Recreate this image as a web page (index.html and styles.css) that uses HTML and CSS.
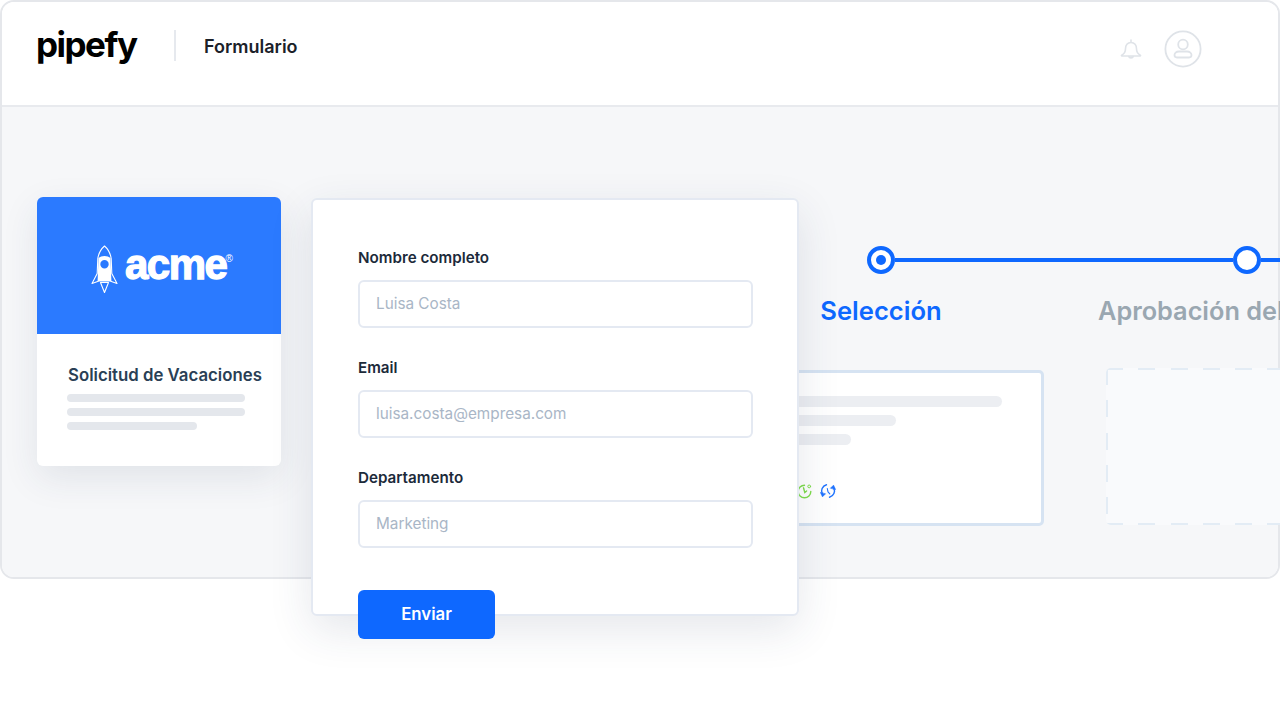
FILE: index.html
```html
<!DOCTYPE html>
<html lang="es">
<head>
<meta charset="utf-8">
<title>Formulario</title>
<link rel="stylesheet" href="styles.css">
</head>
<body>
<div class="window">
  <header class="topbar">
    <div class="brand">pipefy</div>
    <div class="divider"></div>
    <div class="page-title">Formulario</div>
    <div class="top-actions">
      <svg class="bell" width="22" height="22" viewBox="0 0 22 22" fill="none" stroke="#dfe3e8" stroke-width="1.6" stroke-linejoin="round" stroke-linecap="round">
        <path d="M11 1v2.500M11 3.500c-3.600 0-5.500 2.800-5.500 6.200 0 3-1 5-3.800 6.400-.5.3-.3.9.2.9h18.200c.5 0 .7-.6.2-.9-2.800-1.400-3.800-3.400-3.800-6.400 0-3.400-1.900-6.200-5.500-6.200z"/>
        <path d="M8.800 17.500c.4 1.900 4 1.900 4.400 0" fill="#dfe3e8"/>
      </svg>
      <svg class="avatar" width="38" height="38" viewBox="0 0 38 38" fill="none" stroke="#dfe3e8" stroke-width="1.800">
        <circle cx="19" cy="19" r="17.600"/>
        <circle cx="19" cy="14.500" r="4.800"/>
        <path d="M15 21.500h8c3 0 4.500 2 4.500 3.600 0 1.500-1 2.400-2.500 2.400H13c-1.500 0-2.500-.9-2.500-2.400 0-1.600 1.500-3.600 4.500-3.600z"/>
      </svg>
    </div>
  </header>
  <main class="stage">
    <section class="form-card-preview">
      <div class="preview-banner">
        <svg class="rocket" width="27" height="48" viewBox="0 0 27 48">
          <path d="M13.500 1C9.500 4.500 7.500 9 6.800 13.500L6.200 28.500 1 38.500l7-2.500h11l7 2.500-5.200-10-.6-15C19.500 9 17.500 4.500 13.500 1z" fill="none" stroke="#fff" stroke-width="1.100" stroke-linejoin="round"/>
          <path fill-rule="evenodd" d="M7.500 13c1.500-1.300 3.700-2 6-2s4.500.7 6 2l.9 23H6.600zM13.500 15a4.200 4.200 0 1 0 0 8.400 4.200 4.200 0 0 0 0-8.400z" fill="#fff"/>
          <path d="M9.500 37.500h8L13.500 47.500z" fill="none" stroke="#fff" stroke-width="1.100" stroke-linejoin="round"/>
        </svg>
        <span class="acme">acme<sup class="reg">®</sup></span>
      </div>
      <div class="preview-body">
        <h2 class="preview-title">Solicitud de Vacaciones</h2>
        <div class="preview-lines">
          <div class="skeleton"></div>
          <div class="skeleton"></div>
          <div class="skeleton skeleton-short"></div>
        </div>
      </div>
    </section>

    <form class="form-card">
      <div class="field">
        <div class="field-label">Nombre completo</div>
        <div class="field-input">Luisa Costa</div>
      </div>
      <div class="field">
        <div class="field-label">Email</div>
        <div class="field-input">luisa.costa@empresa.com</div>
      </div>
      <div class="field">
        <div class="field-label">Departamento</div>
        <div class="field-input">Marketing</div>
      </div>
      <div class="submit">Enviar</div>
    </form>

    <section class="pipeline">
      <div class="timeline">
        <div class="step step-current"></div>
        <div class="track track-long"></div>
        <div class="step"></div>
        <div class="track"></div>
      </div>
      <div class="phases">
        <div class="phase">
          <div class="phase-name phase-active">Selección</div>
          <div class="task">
            <div class="task-line task-line-a"></div>
            <div class="task-line task-line-b"></div>
            <div class="task-line task-line-c"></div>
            <div class="task-icons">
              <svg width="15" height="15" viewBox="0 0 15 15" fill="none" stroke="#7ddc4a" stroke-width="1.400" stroke-linecap="round">
                <path d="M7.500 1.200A6.300 6.300 0 1 0 13.800 7.500"/>
                <path d="M6.500 3.800l1.300 4.700 1.800-1.500"/>
                <circle cx="12.200" cy="2.400" r="1.400" stroke-width="1"/>
              </svg>
              <svg width="16" height="16" viewBox="0 0 16 16" fill="none" stroke="#1f73ff" stroke-width="1.400" stroke-linecap="round" stroke-linejoin="round">
                <path d="M2.400 11.200A6.400 6.400 0 0 1 6.500 1.800"/>
                <path d="M13.600 4.800A6.400 6.400 0 0 1 9.500 14.200"/>
                <path d="M.6 9.800l1.900 4 2.800-2.800z" fill="#1f73ff" stroke-width=".7"/>
                <path d="M15.400 6.200l-1.900-4-2.800 2.800z" fill="#1f73ff" stroke-width=".7"/>
                <path d="M7.300 5.500l.7 3.400 1.800 2" stroke-width="1.100"/>
              </svg>
            </div>
          </div>
        </div>
        <div class="phase">
          <div class="phase-name phase-next">Aprobación del</div>
          <div class="task task-empty"></div>
        </div>
      </div>
    </section>
  </main>
</div>
</body>
</html>
```

FILE: styles.css
```css
* { box-sizing: border-box; }

html, body {
  margin: 0;
  width: 1280px;
  height: 720px;
  overflow: hidden;
  background: #fff;
  font-family: Inter, "Liberation Sans", sans-serif;
}

.window {
  width: 1280px;
  height: 579px;
  border: 2px solid #e5e7eb;
  border-radius: 14px;
  display: flex;
  flex-direction: column;
}

.topbar {
  height: 105px;
  flex: none;
  background: #fff;
  border-bottom: 2px solid #e8eaee;
  border-radius: 12px 12px 0 0;
  display: flex;
  align-items: center;
  padding: 0 76px 16px 34px;
}

.brand {
  font-size: 35px;
  line-height: 44px;
  font-weight: 700;
  letter-spacing: -1.500px;
  color: #000;
  width: 137px;
  margin-top: -3px;
}

.divider {
  width: 2px;
  height: 31px;
  margin-left: 1px;
  background: #e6e9ee;
}

.page-title {
  margin: 2px 0 0 28px;
  font-size: 18px;
  font-weight: 600;
  color: #1b2129;
}

.top-actions {
  margin-left: auto;
  display: flex;
  align-items: center;
  gap: 22px;
}

.bell { margin-top: 8px; }
.avatar { margin-top: 6px; }

.stage {
  flex: 1;
  background: #f6f7f9;
  border-radius: 0 0 12px 12px;
  display: flex;
  align-items: flex-start;
  padding: 90px 0 0 35px;
  min-height: 0;
}

.form-card-preview {
  flex: none;
  width: 244px;
  height: 269px;
  background: #fff;
  border-radius: 6px;
  box-shadow: 0 12px 36px rgba(40, 60, 90, 0.1);
  overflow: hidden;
}

.preview-banner {
  height: 137px;
  background: #2b7aff;
  display: flex;
  align-items: center;
  padding: 7px 0 0 54px;
  gap: 7px;
}

.acme {
  color: #fff;
  font-family: "Liberation Sans", Arial, sans-serif;
  font-weight: 700;
  font-size: 42px;
  line-height: 44px;
  letter-spacing: -1.500px;
  -webkit-text-stroke: 1.300px #fff;
  margin-top: -9px;
  display: flex;
  align-items: flex-start;
}

.reg {
  font-size: 10px;
  font-weight: 400;
  line-height: 10px;
  letter-spacing: 0;
  -webkit-text-stroke: 0;
  margin: 11px 0 0 -1px;
}

.preview-body { padding: 29px 0 0 30px; }

.preview-title {
  margin: 0 0 0 1px;
  font-size: 16.800px;
  line-height: 24px;
  font-weight: 600;
  color: #2a3f55;
  white-space: nowrap;
}

.preview-lines {
  display: flex;
  flex-direction: column;
  gap: 6px;
  margin-top: 7px;
}

.skeleton {
  width: 178px;
  height: 8px;
  border-radius: 4px;
  background: #e4e7ec;
}

.skeleton-short { width: 130px; }

.form-card {
  flex: none;
  position: relative;
  z-index: 2;
  width: 488px;
  height: 418px;
  margin: 1px 0 0 30px;
  padding: 48px 44px 0 45px;
  background: #fff;
  border: 2px solid #e4e9f2;
  border-radius: 6px;
  box-shadow: 0 14px 44px rgba(40, 60, 90, 0.12);
}

.field { margin-bottom: 26px; height: 84px; }

.field-label {
  font-size: 15.200px;
  line-height: 20px;
  font-weight: 600;
  color: #1c2a3a;
  margin-bottom: 12px;
}

.field-input {
  width: 395px;
  height: 48px;
  border: 2px solid #e4e9f2;
  border-radius: 6px;
  padding: 0 16px;
  font-size: 15.300px;
  line-height: 44px;
  color: #a9b6c6;
  background: #fff;
}

.submit {
  width: 137px;
  height: 49px;
  margin-top: 38px;
  background: #0e68ff;
  border-radius: 6px;
  color: #fff;
  font-size: 16.800px;
  font-weight: 600;
  line-height: 49px;
  text-align: center;
}

.pipeline {
  flex: none;
  width: 800px;
  margin: 49px 0 0 -81px;
}

.timeline {
  display: flex;
  align-items: center;
  padding-left: 149px;
}

.step {
  flex: none;
  width: 28px;
  height: 28px;
  border: 4px solid #0e68ff;
  border-radius: 50%;
  background: #fff;
  display: flex;
  align-items: center;
  justify-content: center;
}

.step-current::after {
  content: "";
  width: 10px;
  height: 10px;
  border-radius: 50%;
  background: #0e68ff;
}

.track {
  flex: none;
  width: 60px;
  height: 4px;
  background: #0e68ff;
}

.track-long { width: 338px; }

.phases {
  display: flex;
  gap: 62px;
  margin-top: 22px;
}

.phase {
  flex: none;
  width: 326px;
}

.phase-name {
  font-size: 25.600px;
  line-height: 30px;
  font-weight: 600;
  white-space: nowrap;
}

.phase-active {
  color: #0e68ff;
  text-align: center;
}

.phase-next {
  color: #9aa7b1;
  font-size: 25.300px;
  margin-left: -8px;
}

.task {
  width: 326px;
  height: 156px;
  margin-top: 44px;
  background: #fff;
  border: 3px solid #d6e3f2;
  border-radius: 5px;
  padding: 23px 0 0 50px;
}

.task-empty {
  height: 157px;
  margin-top: 42px;
  border: none;
  background-color: #f9fafc;
  background-image:
    repeating-linear-gradient(90deg, #e3ecf5 0 17px, transparent 17px 32.300px),
    repeating-linear-gradient(90deg, #e3ecf5 0 17px, transparent 17px 32.300px),
    repeating-linear-gradient(180deg, #e3ecf5 0 17px, transparent 17px 32.300px);
  background-size: 100% 2px, 100% 2px, 2px 100%;
  background-position: 0 0, 0 100%, 0 0;
  background-repeat: no-repeat;
}

.task-line {
  height: 11px;
  border-radius: 6px;
  background: #eceef2;
  margin-bottom: 8px;
}

.task-line-a { width: 231px; }
.task-line-b { width: 125px; }
.task-line-c { width: 80px; }

.task-icons {
  display: flex;
  align-items: center;
  gap: 8px;
  margin: 38px 0 0 26px;
}
```
